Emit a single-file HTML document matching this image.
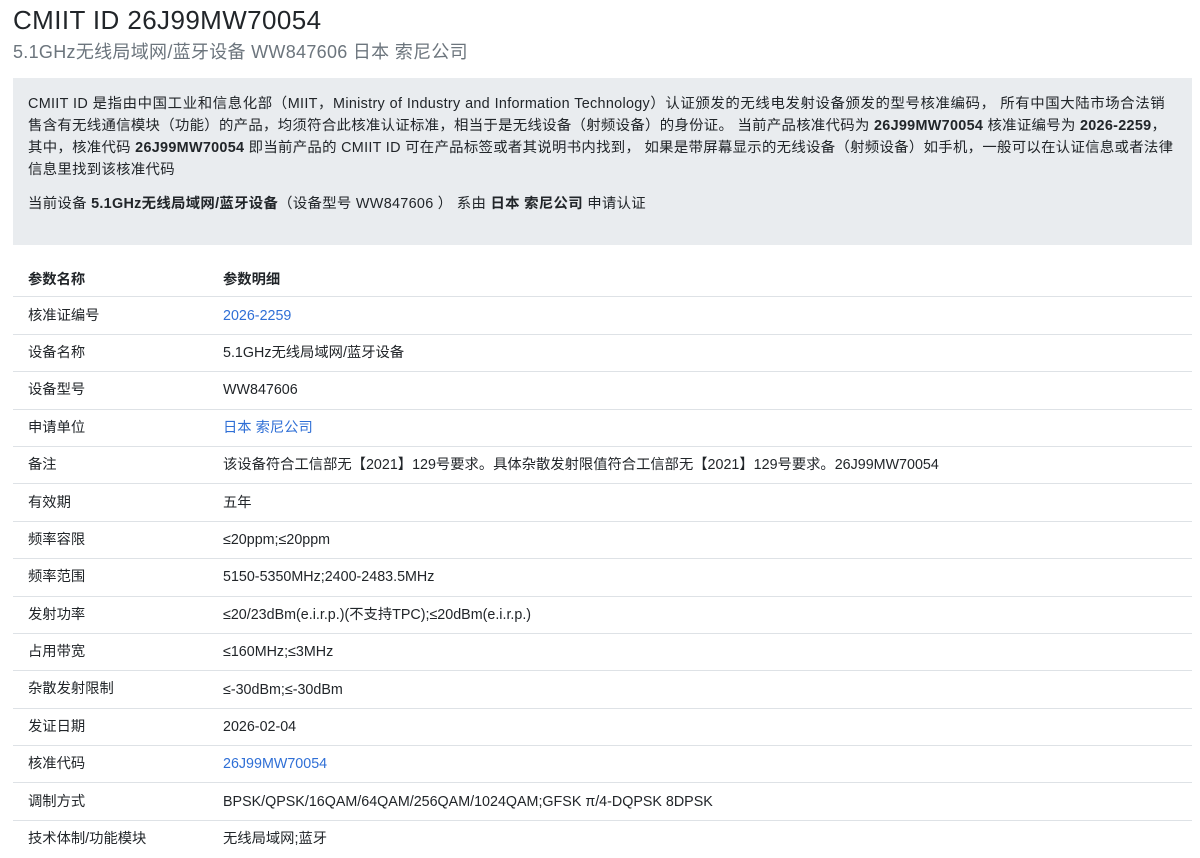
<!DOCTYPE html>
<html><head><meta charset="utf-8"><style>
body{margin:0;background:#fff;font-family:"Liberation Sans","Noto Sans CJK SC",sans-serif;color:#212529;width:1200px;height:858px;overflow:hidden}
h1{font-size:26px;font-weight:400;margin:0;position:absolute;left:13px;top:4px;line-height:32px;letter-spacing:0.4px}
h2{font-size:18px;font-weight:400;color:#6c757d;margin:0;position:absolute;left:13px;top:39px;line-height:26px;letter-spacing:0.3px}
.box{position:absolute;left:13px;top:78px;width:1149px;height:137px;background:#e9ecef;padding:15px 15px;font-size:14.4px;line-height:22px;letter-spacing:0.3px}
.box p{margin:0}
.box p+p{margin-top:12px}
.l{display:block;white-space:nowrap;width:1137px;text-align:justify;text-align-last:justify}
.e{display:block;white-space:nowrap}
table{position:absolute;left:13px;top:260px;width:1179px;border-collapse:collapse;font-size:14.3px}
td,th{height:36.4px;padding:0 15px;text-align:left;border-top:1px solid #dee2e6;vertical-align:middle;line-height:20px}
td span,th span{display:inline-block;line-height:20px;vertical-align:middle}
th{border-top:none;font-weight:bold;padding-top:3px;height:33.4px}
td:first-child,th:first-child{width:165px}
a{color:#2f6fd6;text-decoration:none}
</style></head><body>
<h1>CMIIT ID 26J99MW70054</h1>
<h2>5.1GHz无线局域网/蓝牙设备 WW847606 日本 索尼公司</h2>
<div class="box"><p><span class="l">CMIIT ID 是指由中国工业和信息化部（MIIT，Ministry of Industry and Information Technology）认证颁发的无线电发射设备颁发的型号核准编码， 所有中国大陆市场合法销</span><span class="l">售含有无线通信模块（功能）的产品，均须符合此核准认证标准，相当于是无线设备（射频设备）的身份证。 当前产品核准代码为 <b>26J99MW70054</b> 核准证编号为 <b>2026-2259</b>，</span><span class="l">其中，核准代码 <b>26J99MW70054</b> 即当前产品的 CMIIT ID 可在产品标签或者其说明书内找到， 如果是带屏幕显示的无线设备（射频设备）如手机，一般可以在认证信息或者法律</span><span class="e">信息里找到该核准代码</span></p>
<p>当前设备 <b>5.1GHz无线局域网/蓝牙设备</b>（设备型号 WW847606 ） 系由 <b>日本 索尼公司</b> 申请认证</p></div>
<table>
<tr><th>参数名称</th><th>参数明细</th></tr>
<tr><td>核准证编号</td><td><span><a>2026-2259</a>&#8203;</span></td></tr>
<tr><td>设备名称</td><td>5.1GHz无线局域网/蓝牙设备</td></tr>
<tr><td>设备型号</td><td><span>WW847606</span></td></tr>
<tr><td>申请单位</td><td><a>日本 索尼公司</a></td></tr>
<tr><td>备注</td><td>该设备符合工信部无【2021】129号要求。具体杂散发射限值符合工信部无【2021】129号要求。26J99MW70054</td></tr>
<tr><td>有效期</td><td>五年</td></tr>
<tr><td>频率容限</td><td><span>≤20ppm;≤20ppm</span></td></tr>
<tr><td>频率范围</td><td><span>5150-5350MHz;2400-2483.5MHz</span></td></tr>
<tr><td>发射功率</td><td>≤20/23dBm(e.i.r.p.)(不支持TPC);≤20dBm(e.i.r.p.)</td></tr>
<tr><td>占用带宽</td><td><span>≤160MHz;≤3MHz</span></td></tr>
<tr><td>杂散发射限制</td><td><span>≤-30dBm;≤-30dBm</span></td></tr>
<tr><td>发证日期</td><td><span>2026-02-04</span></td></tr>
<tr><td>核准代码</td><td><span><a>26J99MW70054</a></span></td></tr>
<tr><td>调制方式</td><td><span>BPSK/QPSK/16QAM/64QAM/256QAM/1024QAM;GFSK π/4-DQPSK 8DPSK</span></td></tr>
<tr><td>技术体制/功能模块</td><td>无线局域网;蓝牙</td></tr>
</table>
</body></html>
